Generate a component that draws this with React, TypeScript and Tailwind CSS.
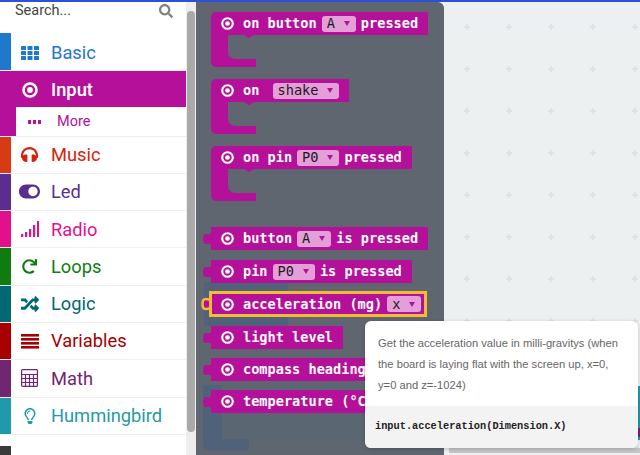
import { FaSearch, FaRedo, FaRandom, FaToggleOn, FaRegLightbulb, FaHeadphones } from 'react-icons/fa'
import type { ReactNode } from 'react'

function GridIcon() {
  return (
    <svg width="18" height="14" viewBox="0 0 18 14" fill="currentColor">
      {[0, 5, 10].map((y) =>
        [0, 6.5, 13].map((x) => <rect key={`${x}-${y}`} x={x} y={y} width="5" height="4" rx="0.5" />)
      )}
    </svg>
  )
}

function TargetIcon({ size = 16 }: { size?: number }) {
  return (
    <svg width={size} height={size} viewBox="0 0 16 16" className="shrink-0">
      <circle cx="8" cy="8" r="6.5" fill="none" stroke="currentColor" strokeWidth="2.6" />
      <circle cx="8" cy="8" r="2.9" fill="currentColor" />
    </svg>
  )
}

function SignalIcon() {
  return (
    <svg width="18" height="16" viewBox="0 0 18 16" fill="currentColor">
      <rect x="0" y="13" width="2.2" height="3" />
      <rect x="4" y="11" width="2.2" height="5" />
      <rect x="8" y="8" width="2.2" height="8" />
      <rect x="12" y="4" width="2.2" height="12" />
      <rect x="16" y="0" width="2.2" height="16" />
    </svg>
  )
}

function StripesIcon() {
  return (
    <svg width="18" height="15" viewBox="0 0 18 15" fill="currentColor">
      <rect y="0" width="18" height="2.6" />
      <rect y="4" width="18" height="2.6" />
      <rect y="8" width="18" height="2.6" />
      <rect y="12" width="18" height="2.6" />
    </svg>
  )
}

function CalcIcon() {
  return (
    <svg width="17" height="18" viewBox="0 0 17 18" fill="none" stroke="currentColor" strokeWidth="1.2">
      <rect x="0.6" y="0.6" width="15.8" height="16.8" rx="1" />
      <path d="M0.5 5.5H16.5M0.5 9.5H16.5M0.5 13.5H16.5M4.5 5.5V17.5M8.5 5.5V17.5M12.5 5.5V17.5" />
    </svg>
  )
}

const categories: { label: string; strip: string; text: string; icon: ReactNode }[] = [
  { label: 'Music', strip: 'bg-[#d83b13]', text: 'text-[#d4230c]', icon: <FaHeadphones size={17} /> },
  { label: 'Led', strip: 'bg-[#5c2d91]', text: 'text-[#5c2d91]', icon: <FaToggleOn size={21} /> },
  { label: 'Radio', strip: 'bg-[#e3108c]', text: 'text-[#e3108c]', icon: <SignalIcon /> },
  { label: 'Loops', strip: 'bg-[#107c10]', text: 'text-[#107c10]', icon: <FaRedo size={15} /> },
  { label: 'Logic', strip: 'bg-[#006970]', text: 'text-[#006970]', icon: <FaRandom size={18} /> },
  { label: 'Variables', strip: 'bg-[#a80000]', text: 'text-[#a80000]', icon: <StripesIcon /> },
  { label: 'Math', strip: 'bg-[#712672]', text: 'text-[#712672]', icon: <CalcIcon /> },
  { label: 'Hummingbird', strip: 'bg-[#1f9aab]', text: 'text-[#1f9aab]', icon: <FaRegLightbulb size={16} /> },
]

function Dropdown({ value }: { value: string }) {
  return (
    <span className="flex h-[16px] items-center gap-[9px] rounded-[3px] bg-[#e49fd8] pl-[5px] pr-[6px] font-normal text-[#1a1a1a]">
      {value}
      <svg width="6" height="5" viewBox="0 0 6 5" className="shrink-0">
        <polygon points="0,0 6,0 3,5" fill="#b4109a" />
      </svg>
    </span>
  )
}

function Label({ children }: { children: ReactNode }) {
  return <span className="whitespace-pre">{children}</span>
}

function BlockBody({ children, className = '' }: { children: ReactNode; className?: string }) {
  return (
    <div className={`flex w-fit items-center gap-[5px] bg-[#b4109a] text-white ${className}`}>
      <span className="mr-[5px] flex w-[12px] justify-center">
        <TargetIcon size={13} />
      </span>
      {children}
    </div>
  )
}

function HatBlock({ children, className = '' }: { children: ReactNode; className?: string }) {
  return (
    <div className={`ml-[8px] ${className}`}>
      <BlockBody className="h-[23px] rounded-tl-[5px] pl-[10px] pr-[10px]">{children}</BlockBody>
      <svg width="45" height="32" viewBox="0 0 45 32" className="block">
        <path
          d="M0 0H45 Q41 0 40 2 Q38 4 36 2 Q35 0 32 0 H17 V16 Q17 24 25 24 H45 V32 H6 Q0 32 0 26 Z"
          fill="#b4109a"
        />
      </svg>
    </div>
  )
}

function ValueBlock({ children, className = '' }: { children: ReactNode; className?: string }) {
  return (
    <div className={`flex items-center ${className}`}>
      <svg width="8" height="12" viewBox="0 0 8 12" className="shrink-0">
        <path d="M8 0 V12 C7 10 5 11 3 11 C1 11 0 9 0 6 C0 3 1 1 3 1 C5 1 7 2 8 0 Z" fill="#b4109a" />
      </svg>
      <BlockBody className="h-[23px] pl-[10px] pr-[10px]">{children}</BlockBody>
    </div>
  )
}

export default function App() {
  return (
    <div className="relative flex h-[455px] w-[640px] flex-col overflow-hidden bg-white font-['Roboto',sans-serif]">
      <div className="h-[2px] shrink-0 bg-[#2d50d8]" />
      <div className="flex min-h-0 flex-1">
        {/* toolbox */}
        <div className="flex w-[186px] shrink-0 flex-col bg-white">
          <div className="flex h-[31px] shrink-0 justify-between pl-[15px] pr-[13px] text-[14.5px] leading-[18px] text-[#444]">
            <span>Search...</span>
            <FaSearch size={14} className="mt-[2px] text-[#808080]" />
          </div>
          <div className="flex h-[38px] shrink-0 border-b border-[#eee]">
            <div className="w-[11px] bg-[#1e78cc]" />
            <div className="flex w-[40px] items-center justify-center pr-[3px] pt-[2px] text-[#1e78cc]"><GridIcon /></div>
            <div className="flex items-center pt-[2px] text-[18.3px] text-[#1e78cc]">Basic</div>
          </div>
          <div className="flex h-[36px] shrink-0 bg-[#b4109a] pt-[1px] text-white">
            <div className="w-[11px]" />
            <div className="flex w-[40px] items-center justify-center pr-[3px]"><TargetIcon /></div>
            <div className="flex items-center text-[18.3px] font-medium">Input</div>
          </div>
          <div className="flex h-[29.5px] shrink-0 border-b border-[#eee] pt-[2px] text-[#b4109a]">
            <div className="-mt-[2px] w-[16px] bg-[#b4109a]" />
            <div className="flex w-[41px] items-center pl-[12px]">
              <span className="flex gap-[2px]">
                <span className="h-[4px] w-[3px] bg-[#b4109a]" />
                <span className="h-[4px] w-[3px] bg-[#b4109a]" />
                <span className="h-[4px] w-[3px] bg-[#b4109a]" />
              </span>
            </div>
            <div className="flex items-center text-[14.5px]">More</div>
          </div>
          {categories.map((c) => (
            <div key={c.label} className="flex h-[37.3px] shrink-0 border-b border-[#f0f0f0]">
              <div className={`w-[11px] ${c.strip}`} />
              <div className={`flex w-[40px] items-center justify-center pr-[3px] ${c.text}`}>{c.icon}</div>
              <div className={`flex items-center text-[18.3px] ${c.text}`}>{c.label}</div>
            </div>
          ))}
          <div className="flex flex-1 flex-col pt-[11px]">
            <div className="h-[11px] w-[11px] bg-[#3a3a3a]" />
          </div>
        </div>

        {/* toolbox scrollbar */}
        <div className="w-[10px] shrink-0 bg-[#eeeeee]">
          <div className="ml-[1px] mt-[9px] h-[421px] w-[8px] rounded-full bg-[#a9a9a9]" />
        </div>

        {/* flyout */}
        <div className="relative w-[248px] shrink-0 rounded-tr-[6px] bg-[#5f6670] pl-[7px] pt-[10px] font-['DejaVu_Sans_Mono',monospace] text-[13.6px] font-bold">
          <svg width="248" height="173" viewBox="0 0 248 173" className="absolute left-0 top-[280px]">
            <rect x="8" y="0" width="84" height="44" fill="#50617a" />
            <path d="M26 103 H248 V160 H34 Q26 160 26 152 Z" fill="#5a6672" />
            <path d="M7 103 H26 V157 H53 V168 H13 Q7 168 7 162 Z" fill="#50617a" />
          </svg>
          <div className="relative">
            <HatBlock>
              <Label>on button</Label>
              <Dropdown value="A" />
              <Label>pressed</Label>
            </HatBlock>
            <HatBlock className="mt-[12px]">
              <Label>on </Label>
              <Dropdown value="shake" />
            </HatBlock>
            <HatBlock className="mt-[12px]">
              <Label>on pin</Label>
              <Dropdown value="P0" />
              <Label>pressed</Label>
            </HatBlock>
            <ValueBlock className="mt-[26px]">
              <Label>button</Label>
              <Dropdown value="A" />
              <Label>is pressed</Label>
            </ValueBlock>
            <ValueBlock className="mt-[10px]">
              <Label>pin</Label>
              <Dropdown value="P0" />
              <Label>is pressed</Label>
            </ValueBlock>
            <div className="mt-[8px] flex items-center">
              <svg width="11" height="16" viewBox="0 0 11 16" className="-ml-[2px] shrink-0">
                <path
                  d="M11 1.5 C10 5 7 3 4.5 3 C2 3 1.5 5 1.5 8 C1.5 11 2 13 4.5 13 C7 13 10 11 11 14.5"
                  fill="#b4109a"
                  stroke="#f5bb35"
                  strokeWidth="2.5"
                />
              </svg>
              <div className="-ml-[3px] border-[3px] border-[#f5bb35]">
                <BlockBody className="h-[20px] pl-[9px] pr-[3px]">
                  <Label>acceleration (mg)</Label>
                  <Dropdown value="x" />
                </BlockBody>
              </div>
            </div>
            <ValueBlock className="mt-[9px]">
              <Label>light level</Label>
            </ValueBlock>
            <ValueBlock className="mt-[9px]">
              <Label>compass heading (°)</Label>
            </ValueBlock>
            <ValueBlock className="mt-[9px]">
              <Label>temperature (°C)</Label>
            </ValueBlock>
          </div>
        </div>

        {/* workspace */}
        <div className="relative flex min-w-0 flex-1 flex-col justify-end bg-[#ecf0f1] pb-[2px]">
          <svg width="100%" height="100%" className="absolute inset-0">
            <defs>
              <pattern id="grid" width="42" height="42" patternUnits="userSpaceOnUse">
                <path d="M20 25H26M23 22V28" stroke="#dadfe1" strokeWidth="1.5" />
              </pattern>
            </defs>
            <rect width="100%" height="100%" fill="url(#grid)" />
          </svg>
          <div className="relative ml-[5px] h-[5px] bg-[#c6c6c6]" />
        </div>
      </div>

      {/* peek of the hidden toolbar at the right edge */}
      <div className="absolute left-[638px] top-[386px] h-[54px] w-[2px] bg-[#1f9aab]">
        <div className="mt-[42px] h-[9px] bg-[#712672]" />
      </div>

      {/* tooltip */}
      <div className="absolute left-[365px] top-[321px] flex h-[127px] w-[273px] flex-col overflow-hidden rounded-[6px] bg-white shadow-[0_1px_4px_rgba(0,0,0,0.2)]">
        <div className="h-[85px] shrink-0 pl-[13px] pr-[18px] pt-[12px] font-['Liberation_Sans',sans-serif] text-[11.2px] leading-[21px] text-[#666]">
          Get the acceleration value in milli-gravitys (when the board is laying flat with the screen up, x=0, y=0 and z=-1024)
        </div>
        <div className="flex flex-1 items-center bg-[#f3f3f3] pl-[10px] font-['Liberation_Mono',monospace] text-[10.3px] font-bold text-[#222]">
          input.acceleration(Dimension.X)
        </div>
      </div>
    </div>
  )
}
